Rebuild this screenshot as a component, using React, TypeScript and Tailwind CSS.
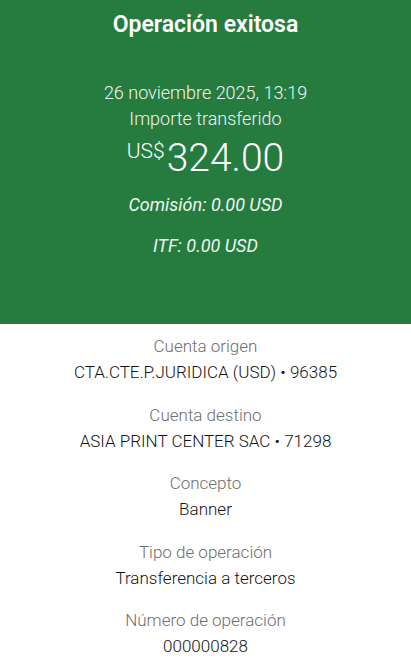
const details = [
  { label: "Cuenta origen", value: "CTA.CTE.P.JURIDICA (USD) • 96385" },
  { label: "Cuenta destino", value: "ASIA PRINT CENTER SAC • 71298" },
  { label: "Concepto", value: "Banner" },
  { label: "Tipo de operación", value: "Transferencia a terceros" },
  { label: "Número de operación", value: "000000828" },
];

export default function App() {
  return (
    <div className="flex h-[668px] w-[411px] flex-col overflow-hidden bg-white font-['Roboto',sans-serif]">
      <div className="flex h-[324px] shrink-0 flex-col items-center bg-[#267b3f] text-white">
        <h1 className="mt-[11px] text-[23px] font-semibold leading-[28px]">Operación exitosa</h1>
        <div className="mt-[41px] text-[18px] font-light leading-[26px] text-[#f1f7f2]">26 noviembre 2025, 13:19</div>
        <div className="text-[18px] font-light leading-[26px] text-[#f1f7f2]">Importe transferido</div>
        <div className="mt-[6px] flex items-start">
          <span className="mt-[2px] mr-[2px] text-[21px] font-light leading-[22px]">US$</span>
          <span className="text-[39px] font-light leading-[40px]">324.00</span>
        </div>
        <div className="mt-[14px] text-[18px] italic leading-[26px] text-[#eef5ef]">Comisión: 0.00 USD</div>
        <div className="mt-[15px] text-[18px] italic leading-[26px] text-[#eef5ef]">ITF: 0.00 USD</div>
      </div>
      <div className="h-px bg-[#9fc3a8]" />
      <div className="flex flex-1 flex-col items-center pt-[9px]">
        {details.map((item) => (
          <div key={item.label} className="mb-[16.5px] flex flex-col items-center">
            <div className="text-[17px] font-light leading-[26px] text-[#6e6e6e]">{item.label}</div>
            <div className="text-[17px] font-light leading-[26px] text-[#141414]">{item.value}</div>
          </div>
        ))}
      </div>
      <div className="h-[2px] bg-[#c4c4c4]" />
    </div>
  );
}
